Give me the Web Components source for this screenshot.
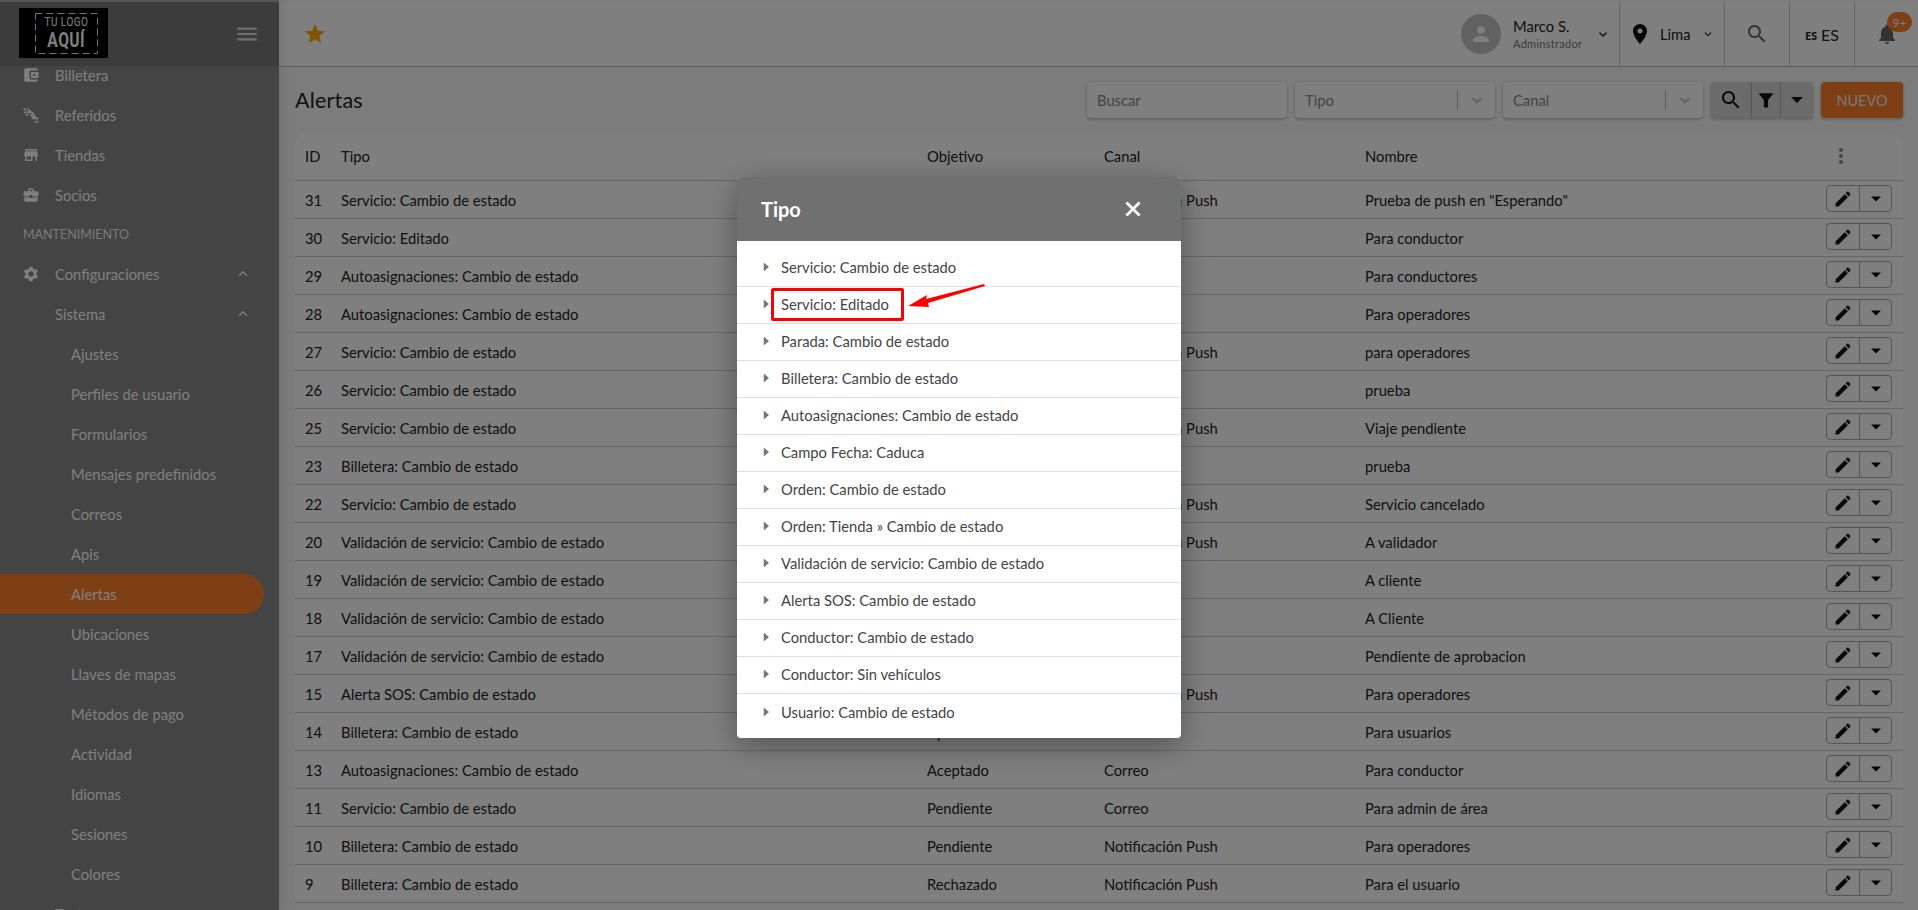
<!DOCTYPE html>
<html lang="es"><head><meta charset="utf-8"><title>Alertas</title>
<style>
html,body{margin:0;height:100%;overflow:hidden}
body{font:14.75px "Lato","Open Sans",sans-serif;color:#333;background:#f8f8f8}
</style></head><body>
<x-app></x-app>
<script>
const P={
wallet:'M21 18v1c0 1.1-.9 2-2 2H5c-1.11 0-2-.9-2-2V5c0-1.1.89-2 2-2h14c1.1 0 2 .9 2 2v1h-9c-1.11 0-2 .9-2 2v8c0 1.1.89 2 2 2h9zm-9-2h10V8H12v8zm4-2.5c-.83 0-1.5-.67-1.5-1.5s.67-1.5 1.5-1.5 1.5.67 1.5 1.5-.67 1.5-1.5 1.5z',
ref:'M2 4.5h4M3 9l4-1.5M8 3l1.5 4M8 10l3-3 3 3M11 14l3-3 3 3M15 18l2.5-3 3 3M11 6l1 3M5 12l4-1M14 11l1.5-2M13 16l3-2M17 21h5M19 16l3 1',
store:'M20 4H4v2h16V4zm1 10v-2l-1-5H4l-1 5v2h1v6h10v-6h4v6h2v-6h1zm-9 4H6v-4h6v4z',
case:'M10 16v-1H3.01L3 19c0 1.11.89 2 2 2h14c1.11 0 2-.89 2-2v-4h-7v1h-4zm10-9h-4.01V5l-2-2h-4l-2 2v2H4c-1.1 0-2 .9-2 2v3c0 1.11.89 2 2 2h6v-2h4v2h6c1.1 0 2-.9 2-2V9c0-1.1-.9-2-2-2zm-6 0h-4V5h4v2z',
gear:'M19.14 12.94c.04-.3.06-.61.06-.94 0-.32-.02-.64-.07-.94l2.03-1.58a.49.49 0 0 0 .12-.61l-1.92-3.32a.488.488 0 0 0-.59-.22l-2.39.96c-.5-.38-1.03-.7-1.62-.94l-.36-2.54a.484.484 0 0 0-.48-.41h-3.84c-.24 0-.43.17-.47.41l-.36 2.54c-.59.24-1.13.57-1.62.94l-2.39-.96c-.22-.08-.47 0-.59.22L2.74 8.87c-.12.21-.08.47.12.61l2.03 1.58c-.05.3-.09.63-.09.94s.02.64.07.94l-2.03 1.58a.49.49 0 0 0-.12.61l1.92 3.32c.12.22.37.29.59.22l2.39-.96c.5.38 1.03.7 1.62.94l.36 2.54c.05.24.24.41.48.41h3.84c.24 0 .44-.17.47-.41l.36-2.54c.59-.24 1.13-.56 1.62-.94l2.39.96c.22.08.47 0 .59-.22l1.92-3.32c.12-.22.07-.47-.12-.61l-2.01-1.58zM12 15.6c-1.98 0-3.6-1.62-3.6-3.6s1.62-3.6 3.6-3.6 3.6 1.62 3.6 3.6-1.62 3.6-3.6 3.6z',
star:'M12 17.27L18.18 21l-1.64-7.03L22 9.24l-7.19-.61L12 2 9.19 8.63 2 9.24l5.46 4.73L5.82 21z',
place:'M12 2C8.13 2 5 5.13 5 9c0 5.25 7 13 7 13s7-7.75 7-13c0-3.87-3.13-7-7-7zm0 9.5c-1.38 0-2.5-1.12-2.5-2.5s1.12-2.5 2.5-2.5 2.5 1.12 2.5 2.5-1.12 2.5-2.5 2.5z',
bell:'M12 22c1.1 0 2-.9 2-2h-4c0 1.1.9 2 2 2zm6-6v-5c0-3.07-1.64-5.64-4.5-6.32V4c0-.83-.67-1.5-1.5-1.5s-1.5.67-1.5 1.5v.68C7.63 5.36 6 7.92 6 11v5l-2 2v1h16v-1l-2-2z',
search:'M15.5 14h-.79l-.28-.27C15.41 12.59 16 11.11 16 9.5 16 5.91 13.09 3 9.5 3S3 5.91 3 9.5 5.91 16 9.5 16c1.61 0 3.09-.59 4.23-1.57l.27.28v.79l5 4.99L20.49 19l-4.99-5zm-6 0C7.01 14 5 11.99 5 9.5S7.01 5 9.5 5 14 7.01 14 9.5 11.99 14 9.5 14z',
person:'M12 12c2.21 0 4-1.79 4-4s-1.79-4-4-4-4 1.79-4 4 1.79 4 4 4zm0 2c-2.67 0-8 1.34-8 4v2h16v-2c0-2.66-5.33-4-8-4z',
funnel:'M3 4h18l-6.5 8v9h-5v-9z',
edit:'M3 17.25V21h3.75L17.81 9.94l-3.75-3.75L3 17.25zM20.71 7.04a1 1 0 0 0 0-1.41l-2.34-2.34a1 1 0 0 0-1.41 0l-1.83 1.83 3.75 3.75 1.83-1.83z',
caret:'M6 9h12l-6 6z',
down:'M7.4 9l4.6 4.6L16.6 9 18 10.4l-6 6-6-6z',
up:'M7.4 15l4.6-4.6 4.6 4.6 1.4-1.4-6-6-6 6z',
menu:'M3 18h18v-2H3v2zm0-5h18v-2H3v2zm0-7v2h18V6H3z',
close:'M19 6.41L17.59 5 12 10.59 6.41 5 5 6.41 10.59 12 5 17.59 6.41 19 12 13.41 17.59 19 19 17.59 13.41 12z',
dots:'M12 8a2 2 0 1 0 0-4 2 2 0 0 0 0 4zm0 2a2 2 0 1 0 0 4 2 2 0 0 0 0-4zm0 6a2 2 0 1 0 0 4 2 2 0 0 0 0-4z',
tri:'M9 6l7 6-7 6z'
};
const ico=(n,s,c='currentColor',st='')=>n==='ref'
?`<svg width="${s}" height="${s}" viewBox="0 0 24 24" fill="none" stroke="${c}" stroke-width="2.2" style="flex:none;display:block;${st}"><path d="${P[n]}"/></svg>`
:`<svg width="${s}" height="${s}" viewBox="0 0 24 24" fill="${c}" style="flex:none;display:block;${st}"><path d="${P[n]}"/></svg>`;
class Base extends HTMLElement{
  connectedCallback(){ if(!this.shadowRoot){this.attachShadow({mode:'open'}).innerHTML=this.render();} }
}
class XApp extends Base{render(){return `<style>
:host{display:block;position:relative;width:100%;height:100vh;overflow:hidden}
.shell{display:flex;height:100%;}
.main{flex:1;min-width:0;display:flex;flex-direction:column;height:100%;overflow:hidden}
.scrim{position:absolute;inset:0;background:rgba(0,0,0,.5);z-index:2}
x-dialog{z-index:3}
</style>
<div class="shell"><x-sidebar></x-sidebar><div class="main"><x-topbar></x-topbar><x-toolbar></x-toolbar><x-table></x-table></div></div>
<div class="scrim"></div>
<x-dialog></x-dialog>`}}
class XSidebar extends Base{render(){
const it=(t,i)=>`<div class="it top">${ico(i,18)}<span>${t}</span></div>`;
const ex=(t,i)=>`<div class="it top">${ico(i,18)}<span>${t}</span>${ico('up',18,'currentColor','margin-left:auto;margin-right:27px')}</div>`;
const sub=t=>`<div class="it sub${t=='Alertas'?' on':''}"><span>${t}</span></div>`;
return `<style>
:host{display:flex;flex-direction:column;flex:none;width:279px;height:100%;background:#888;color:#fff;overflow:hidden;font:14.75px "Lato",sans-serif;position:relative;z-index:1;box-shadow:0 0 12px rgba(0,0,0,.14)}
.head{flex:none;height:64px;display:flex;align-items:center;justify-content:space-between;padding:0 19px 0 19px;background:#787878;position:relative;z-index:1}
.strip{height:2px;background:#aaa;flex:none}
.logo{width:89px;height:50px;background:#000;color:#fff;position:relative;display:flex;flex-direction:column;align-items:center;justify-content:center;line-height:1;margin-top:-2px;box-sizing:border-box;font-family:"Roboto",sans-serif}
.logo svg{position:absolute;left:16px;top:5px}
.logo b{font-weight:400;font-size:12.5px;letter-spacing:.6px;transform:scaleX(.8);margin-bottom:2px;margin-left:5px}
.logo strong{font-weight:700;font-size:20px;letter-spacing:.6px;transform:scaleX(.78);margin-left:5px}
.menu{color:#ddd;display:flex}
.list{margin-top:-11px;flex:none}
.it{height:40px;display:flex;align-items:center;box-sizing:border-box}
.top{padding-left:22px;gap:15px}
.sub{padding-left:71px;margin-right:15px}
.l2{padding-left:55px}
.on{background:#fa7e26;border-radius:0 20px 20px 0;color:#fff}
.cap{height:39px;display:flex;align-items:center;padding-left:23px;font-size:12.5px;color:#eee}
.l2 svg{margin-left:auto;margin-right:27px}
.l2 span{display:block}
</style>
<div class="strip"></div>
<div class="head"><div class="logo"><svg width="63" height="41" viewBox="0 0 63 41" fill="none" stroke="#e8e8e8"><rect x=".5" y=".5" width="62" height="40" stroke-dasharray="7 4"/></svg><b>TU LOGO</b><strong>AQUÍ</strong></div><div class="menu">${ico('menu',26)}</div></div>
<div class="list">
${it('Billetera','wallet')}${it('Referidos','ref')}${it('Tiendas','store')}${it('Socios','case')}
<div class="cap">MANTENIMIENTO</div>
${ex('Configuraciones','gear')}
<div class="it l2"><span>Sistema</span>${ico('up',18)}</div>
${['Ajustes','Perfiles de usuario','Formularios','Mensajes predefinidos','Correos','Apis','Alertas','Ubicaciones','Llaves de mapas','Métodos de pago','Actividad','Idiomas','Sesiones','Colores'].map(sub).join('')}
<div class="it l2"><span>Textos</span></div>
</div>`}}
class XTopbar extends Base{render(){return `<style>
:host{display:flex;flex:none;height:65px;box-sizing:border-box;margin-top:2px;background:#fff;border-bottom:1px solid #bbb;align-items:stretch;font:14.75px "Lato",sans-serif;color:#222}
.star{margin:auto auto auto 24px;color:#ffaa00}
.user{display:flex;align-items:center;padding:0 8px 0 0}
.av{width:40px;height:40px;border-radius:50%;background:#c4c4c4;display:flex;align-items:center;justify-content:center;color:#fff;margin-right:12px}
.nm{display:flex;flex-direction:column;line-height:1;width:82px}
.nm b{font-weight:400;font-size:14.75px;margin-bottom:5px}
.nm small{font-size:11px;color:#777;letter-spacing:.3px}
.cell{display:flex;align-items:center;border-left:1px solid #ccc;justify-content:center;box-sizing:border-box}
.ct{width:105px;justify-content:flex-start;padding-left:8px;gap:8px}
.ct span{width:33px}
.sr{width:65px;color:#666}
.la{width:65px;gap:4px;font-size:16px}
.la b{font-size:10.5px;margin-top:4px;font-weight:900}
.bl{width:64px;position:relative;color:#666}
.badge{position:absolute;right:6px;top:10px;background:#fa7e26;color:#fff;border-radius:10px;width:25px;height:20px;font-size:12px;display:flex;align-items:center;justify-content:center}
</style>
<div class="star">${ico('star',24)}</div>
<div class="user"><div class="av">${ico('person',24)}</div><div class="nm"><b>Marco S.</b><small>Adminstrador</small></div>${ico('down',16,'#222')}</div>
<div class="cell ct">${ico('place',24,'#111')}<span>Lima</span>${ico('down',14,'#222')}</div>
<div class="cell sr">${ico('search',24)}</div>
<div class="cell la"><b>ES</b><span>ES</span></div>
<div class="cell bl">${ico('bell',24)}<span class="badge">9+</span></div>`}}
class XToolbar extends Base{render(){
const sel=(t,w)=>`<div class="in sel" style="width:${w}px"><span>${t}</span><i></i>${ico('down',20,'#bbb')}</div>`;
return `<style>
:host{display:flex;flex:none;align-items:center;height:67px;box-sizing:border-box;padding:0 15px 1px 16px;gap:8px;font:14.75px "Lato",sans-serif;color:#222}
h1{font-weight:400;font-size:21.5px;margin:0 auto 0 0;color:#222;letter-spacing:.2px}
.in{height:36px;box-sizing:border-box;background:#fff;border-radius:4px;box-shadow:0 1px 3px rgba(0,0,0,.3);color:#888;display:flex;align-items:center;padding:0 10px}
.sel i{width:1px;height:20px;background:#bbb;margin-left:auto;margin-right:9px}
.sel svg{margin-right:-2px}
.grp{height:36px;display:flex;background:#d7d7d7;border-radius:4px;box-shadow:0 1px 3px rgba(0,0,0,.3)}
.grp div{display:flex;align-items:center;justify-content:center;border-left:1px solid #aaa;color:#111}
.grp div:first-child{border:0}
.new{height:36px;width:82px;background:#fa7e26;color:#f0f0f0;border-radius:4px;box-shadow:0 1px 3px rgba(0,0,0,.3);display:flex;align-items:center;justify-content:center;font-size:14.5px}
</style>
<h1>Alertas</h1>
<div class="in" style="width:200px"><span>Buscar</span></div>
${sel('Tipo',200)}${sel('Canal',200)}
<div class="grp"><div style="width:40px">${ico('search',24)}</div><div style="width:28px">${ico('funnel',20)}</div><div style="width:32px">${ico('caret',24)}</div></div>
<div class="new">NUEVO</div>`}}
const ROWS=[[31,'Servicio: Cambio de estado','Esperando','Notificación Push','Prueba de push en "Esperando"'],
[30,'Servicio: Editado','Origen','Correo','Para conductor'],
[29,'Autoasignaciones: Cambio de estado','Aceptado','Correo','Para conductores'],
[28,'Autoasignaciones: Cambio de estado','Aceptado','Correo','Para operadores'],
[27,'Servicio: Cambio de estado','Pendiente','Notificación Push','para operadores'],
[26,'Servicio: Cambio de estado','Pendiente','Correo','prueba'],
[25,'Servicio: Cambio de estado','Pendiente','Notificación Push','Viaje pendiente'],
[23,'Billetera: Cambio de estado','Pendiente','Correo','prueba'],
[22,'Servicio: Cambio de estado','Cancelado','Notificación Push','Servicio cancelado'],
[20,'Validación de servicio: Cambio de estado','Pendiente','Notificación Push','A validador'],
[19,'Validación de servicio: Cambio de estado','Aprobado','Correo','A cliente'],
[18,'Validación de servicio: Cambio de estado','Rechazado','Correo','A Cliente'],
[17,'Validación de servicio: Cambio de estado','Pendiente','Correo','Pendiente de aprobacion'],
[15,'Alerta SOS: Cambio de estado','Pendiente','Notificación Push','Para operadores'],
[14,'Billetera: Cambio de estado','Aprobado','Correo','Para usuarios'],
[13,'Autoasignaciones: Cambio de estado','Aceptado','Correo','Para conductor'],
[11,'Servicio: Cambio de estado','Pendiente','Correo','Para admin de área'],
[10,'Billetera: Cambio de estado','Pendiente','Notificación Push','Para operadores'],
[9,'Billetera: Cambio de estado','Rechazado','Notificación Push','Para el usuario']];
class XTable extends Base{render(){return `<style>
:host{display:block;margin:0 15px 0 16px;background:#fff;border-radius:10px 10px 0 0;font:14.75px "Lato",sans-serif;color:#222;flex:none}
.r{display:grid;grid-template-columns:46px 586px 177px 261px 461px 77px;height:38px;align-items:center;border-bottom:1px solid #ccc;box-sizing:border-box}
.h{height:47px;padding-bottom:2px}
.r>:first-child{padding-left:10px}
.btn{width:66px;height:27px;box-sizing:border-box;border:1px solid #aaa;border-radius:4px;display:flex;color:#111;margin-top:-2px}
.btn span{display:flex;align-items:center;justify-content:center}
.btn span:first-child{width:32px;border-right:1px solid #aaa}
.btn span:last-child{flex:1}
.k{color:#888;margin-left:3px}
</style>
<div class="r h"><span>ID</span><span>Tipo</span><span>Objetivo</span><span>Canal</span><span>Nombre</span><span class="k">${ico('dots',24)}</span></div>
${ROWS.map(r=>`<div class="r">${r.map(c=>`<span>${c}</span>`).join('')}<div class="btn"><span>${ico('edit',20)}</span><span>${ico('caret',20)}</span></div></div>`).join('')}`}}
class XDialog extends Base{render(){
const L=['Servicio: Cambio de estado','Servicio: Editado','Parada: Cambio de estado','Billetera: Cambio de estado','Autoasignaciones: Cambio de estado','Campo Fecha: Caduca','Orden: Cambio de estado','Orden: Tienda » Cambio de estado','Validación de servicio: Cambio de estado','Alerta SOS: Cambio de estado','Conductor: Cambio de estado','Conductor: Sin vehículos','Usuario: Cambio de estado'];
return `<style>
:host{position:absolute;left:737px;top:177px;width:444px;border-radius:4px;background:#fff;box-shadow:0 8px 30px rgba(0,0,0,.35);font:14.75px "Lato",sans-serif;color:#444;display:block}
.h{height:64px;background:#707070;border-radius:4px 4px 0 0;display:flex;align-items:center;justify-content:space-between;padding:0 36px 0 24px;color:#fff;font-size:20px;font-weight:700}
.b{padding:9px 0 0;height:497px;box-sizing:border-box}
.o{height:37px;box-sizing:border-box;display:flex;align-items:center;padding:0 0 2px 20px;border-bottom:1px solid #e0e0e0;gap:6px;color:#444}
.o:last-child{border:0}
.box{position:absolute;left:34px;top:111px;width:133px;height:33px;border:3px solid #f00;border-radius:2px;box-sizing:border-box}
.ar{position:absolute;left:171px;top:106px}
</style>
<div class="h"><span>Tipo</span><svg width="24" height="24" viewBox="0 0 24 24" fill="#fff" stroke="#fff" stroke-width="1"><path d="${P.close}"/></svg></div>
<div class="b">${L.map(t=>`<div class="o">${ico('tri',18,'#777')}<span>${t}</span></div>`).join('')}</div>
<div class="box"></div>
<svg class="ar" width="80" height="30" viewBox="0 0 80 30"><path d="M0 23L19 12 18 16 76 1 77 3 20 20 21 24z" fill="#f00"/></svg>`}}
customElements.define('x-sidebar',XSidebar);customElements.define('x-topbar',XTopbar);customElements.define('x-toolbar',XToolbar);customElements.define('x-table',XTable);customElements.define('x-dialog',XDialog);customElements.define('x-app',XApp);
</script></body></html>
